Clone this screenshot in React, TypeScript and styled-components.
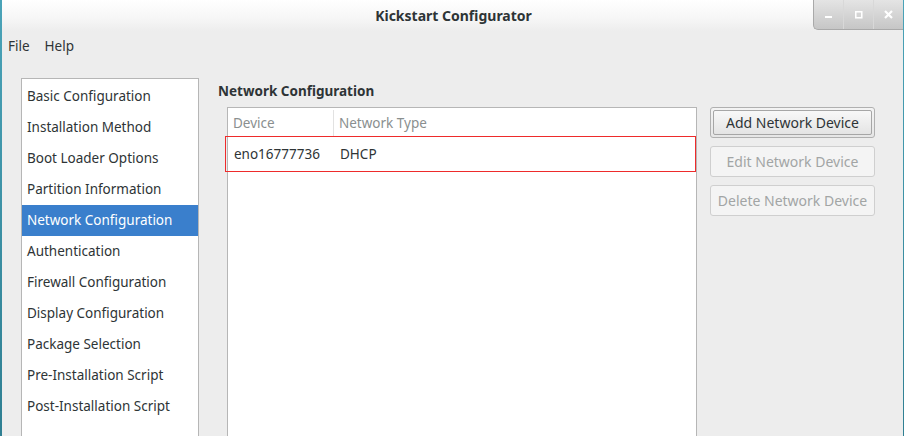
import React from 'react';
import styled, { createGlobalStyle } from 'styled-components';

const GlobalStyle = createGlobalStyle`
  html, body {
    margin: 0;
    padding: 0;
    background: #3d8da0;
    overflow: hidden;
  }
  body {
    font-family: "Noto Sans", "DejaVu Sans", sans-serif;
    font-size: 13.5px;
    color: #2e3436;
  }
`;

const Desktop = styled.div`
  width: 904px;
  height: 436px;
  padding: 0 1px 0 2px;
  box-sizing: border-box;
  background: linear-gradient(180deg, #4aa3b8, #2f7f92);
`;

const Window = styled.div`
  height: 100%;
  background: #ededed;
  display: flex;
  flex-direction: column;
  overflow: hidden;
`;

const TitleBar = styled.div`
  position: relative;
  height: 31px;
  flex: none;
  background: linear-gradient(180deg, #ffffff 0%, #f6f6f6 60%, #ededed 100%);
  display: flex;
  align-items: center;
  justify-content: center;
`;

const Title = styled.div`
  font-weight: 700;
  font-size: 14px;
  color: #2e3436;
  margin-left: 2px;
`;

const WindowControls = styled.div`
  position: absolute;
  top: 0;
  right: 0;
  height: 29px;
  display: flex;
  border: 1px solid #a9a9a9;
  border-top: none;
  border-right: none;
  border-bottom-left-radius: 5px;
  overflow: hidden;
  background: linear-gradient(180deg, #e4e4e4, #c6c6c6);
`;

const ControlButton = styled.div`
  width: 29px;
  height: 29px;
  display: flex;
  align-items: center;
  justify-content: center;
  border-left: 1px solid #d8d8d8;
  &:first-child {
    border-left: none;
  }
`;

const MenuBar = styled.div`
  height: 32px;
  flex: none;
  display: flex;
  align-items: center;
  gap: 15px;
  padding: 0 0 0 6px;
  margin-top: -1px;
`;

const MenuItem = styled.span`
  color: #2e3436;
`;

const Body = styled.div`
  flex: 1;
  display: flex;
  padding: 16px 0 0 19px;
  min-height: 0;
`;

const Sidebar = styled.div`
  width: 176px;
  flex: none;
  background: #ffffff;
  border: 1px solid #b6b6b6;
  border-bottom: none;
  padding-top: 2px;
`;

const SideItem = styled.div<{ $active?: boolean }>`
  height: 31px;
  line-height: 31px;
  padding-left: 5px;
  white-space: nowrap;
  background: ${p => (p.$active ? '#3a7fcc' : 'transparent')};
  color: ${p => (p.$active ? '#ffffff' : '#2e3436')};
`;

const Main = styled.div`
  flex: 1;
  display: flex;
  flex-direction: column;
  padding-left: 19px;
  min-width: 0;
`;

const Heading = styled.div`
  font-weight: 700;
  color: #2e3436;
  height: 28px;
  line-height: 26px;
`;

const Content = styled.div`
  flex: 1;
  display: flex;
  gap: 13px;
  min-height: 0;
`;

const TableBox = styled.div`
  width: 468px;
  margin-left: 9px;
  margin-top: 1px;
  background: #ffffff;
  border: 1px solid #b6b6b6;
  border-bottom: none;
  flex: none;
`;

const HeaderRow = styled.div`
  display: flex;
  height: 26px;
  padding-top: 2px;
  align-items: center;
  color: #8a8f8f;
`;

const Cell = styled.div<{ $width?: number; $divider?: boolean }>`
  width: ${p => (p.$width ? `${p.$width}px` : 'auto')};
  flex: ${p => (p.$width ? 'none' : '1')};
  padding-left: 5px;
  height: 100%;
  display: flex;
  align-items: center;
  box-sizing: border-box;
  border-right: ${p => (p.$divider ? '1px solid #e2e2e2' : 'none')};
  white-space: nowrap;
`;

const DataRow = styled.div`
  display: flex;
  height: 36px;
  align-items: center;
  margin-left: -3px;
  padding-left: 3px;
  border: 1px solid #ee2b2b;
  box-sizing: border-box;
  color: #2e3436;
`;

const ButtonColumn = styled.div`
  display: flex;
  flex-direction: column;
  gap: 8px;
  padding-top: 1px;
`;

const Button = styled.div<{ $disabled?: boolean }>`
  width: 165px;
  height: 31px;
  box-sizing: border-box;
  border: 1px solid ${p => (p.$disabled ? '#cfcfcf' : '#b0b0b0')};
  border-radius: 3px;
  background: ${p => (p.$disabled ? '#f4f4f4' : 'linear-gradient(180deg, #f4f4f4, #e6e6e6)')};
  color: ${p => (p.$disabled ? '#a2a5a5' : '#2e3436')};
  display: flex;
  align-items: center;
  justify-content: center;
  padding: 2px;
  font-size: 14px;
  white-space: nowrap;
`;

const FocusRing = styled.div`
  width: 100%;
  height: 100%;
  box-sizing: border-box;
  border: 1px solid #a6a6a6;
  border-radius: 2px;
  background: linear-gradient(180deg, #f8f8f8, #e4e4e4);
  display: flex;
  align-items: center;
  justify-content: center;
`;

const sections = [
  'Basic Configuration',
  'Installation Method',
  'Boot Loader Options',
  'Partition Information',
  'Network Configuration',
  'Authentication',
  'Firewall Configuration',
  'Display Configuration',
  'Package Selection',
  'Pre-Installation Script',
  'Post-Installation Script',
];

const App: React.FC = () => {
  return (
    <>
      <GlobalStyle />
      <Desktop>
        <Window>
          <TitleBar>
            <Title>Kickstart Configurator</Title>
            <WindowControls>
              <ControlButton>
                <svg width="8" height="8" viewBox="0 0 8 8">
                  <rect x="0" y="5" width="7" height="2" fill="#ffffff" />
                </svg>
              </ControlButton>
              <ControlButton>
                <svg width="8" height="8" viewBox="0 0 8 8">
                  <rect x="0.75" y="0.75" width="6" height="6" fill="none" stroke="#ffffff" strokeWidth="1.6" />
                </svg>
              </ControlButton>
              <ControlButton>
                <svg width="9" height="9" viewBox="0 0 9 9">
                  <path d="M1 1 L8 8 M8 1 L1 8" stroke="#ffffff" strokeWidth="2.2" />
                </svg>
              </ControlButton>
            </WindowControls>
          </TitleBar>
          <MenuBar>
            <MenuItem>File</MenuItem>
            <MenuItem>Help</MenuItem>
          </MenuBar>
          <Body>
            <Sidebar>
              {sections.map(s => (
                <SideItem key={s} $active={s === 'Network Configuration'}>
                  {s}
                </SideItem>
              ))}
            </Sidebar>
            <Main>
              <Heading>Network Configuration</Heading>
              <Content>
                <TableBox>
                  <HeaderRow>
                    <Cell $width={106} $divider>Device</Cell>
                    <Cell>Network Type</Cell>
                  </HeaderRow>
                  <DataRow>
                    <Cell $width={106}>eno16777736</Cell>
                    <Cell>DHCP</Cell>
                  </DataRow>
                </TableBox>
                <ButtonColumn>
                  <Button>
                    <FocusRing>Add Network Device</FocusRing>
                  </Button>
                  <Button $disabled>Edit Network Device</Button>
                  <Button $disabled>Delete Network Device</Button>
                </ButtonColumn>
              </Content>
            </Main>
          </Body>
        </Window>
      </Desktop>
    </>
  );
};

export default App;
